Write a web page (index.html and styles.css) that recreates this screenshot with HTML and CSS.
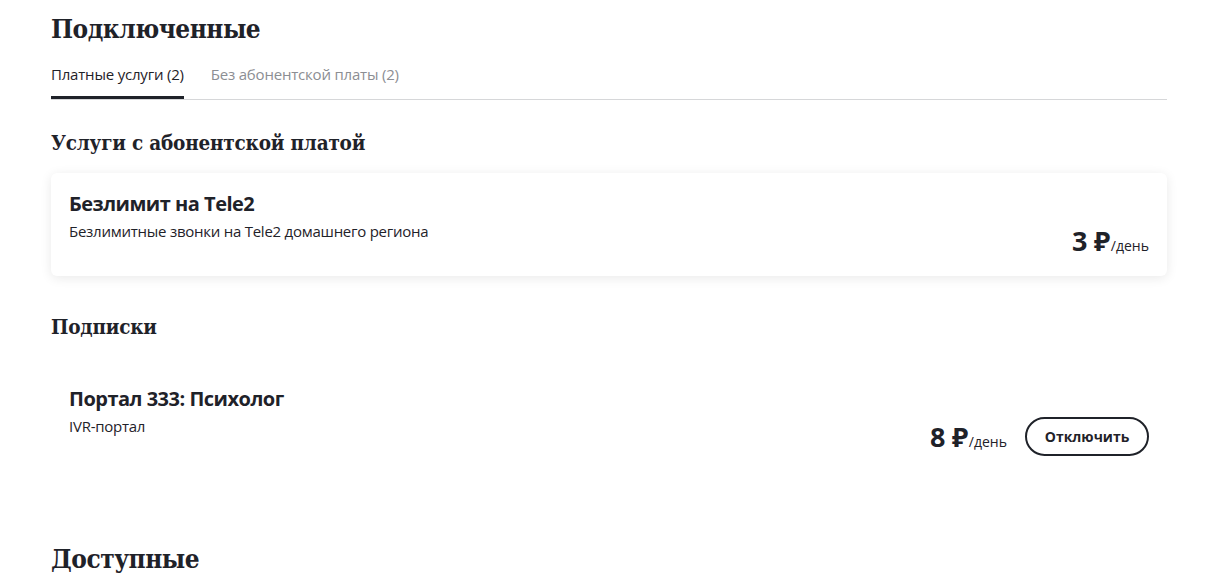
FILE: index.html
```html
<!DOCTYPE html>
<html lang="ru">
<head>
<meta charset="utf-8">
<link rel="stylesheet" href="styles.css">
</head>
<body>
<main class="page">
  <h1 class="title">Подключенные</h1>
  <nav class="tabs">
    <div class="tab active">Платные услуги (2)</div>
    <div class="tab">Без абонентской платы (2)</div>
  </nav>

  <h2 class="section">Услуги с абонентской платой</h2>
  <div class="card shadow">
    <div class="card-info">
      <div class="card-title">Безлимит на Tele2</div>
      <div class="card-sub">Безлимитные звонки на Tele2 домашнего региона</div>
    </div>
    <div class="card-side">
      <div class="price"><span class="amount">3 ₽</span><span class="per">/день</span></div>
    </div>
  </div>

  <h2 class="section subs">Подписки</h2>
  <div class="card plain">
    <div class="card-info">
      <div class="card-title">Портал 333: Психолог</div>
      <div class="card-sub">IVR-портал</div>
    </div>
    <div class="card-side">
      <div class="price"><span class="amount">8 ₽</span><span class="per">/день</span></div>
      <button class="btn">Отключить</button>
    </div>
  </div>

  <h1 class="title available">Доступные</h1>
</main>
</body>
</html>
```
FILE: styles.css
```css
* { box-sizing: border-box; }
html, body { margin: 0; padding: 0; background: #fff; }
body {
  color: #1f2229;
  font-family: "Open Sans", "Noto Sans", sans-serif;
}
.page {
  width: 1116px;
  margin-left: 51px;
  padding-top: 12px;
}
.title {
  font-family: "DejaVu Serif Condensed", "DejaVu Serif", serif;
  font-stretch: condensed;
  font-weight: bold;
  font-size: 26px;
  line-height: 34px;
  margin: 0;
  letter-spacing: -0.5px;
}
.tabs {
  display: flex;
  gap: 27px;
  margin-top: 18px;
  border-bottom: 1px solid #d6d7d9;
}
.tab {
  font-size: 15px;
  line-height: 20px;
  padding-bottom: 15px;
  color: #8c8e93;
  letter-spacing: -0.2px;
}
.tab.active {
  color: #1f2229;
  box-shadow: inset 0 -3px 0 #1f2229;
}
.section {
  font-family: "DejaVu Serif Condensed", "DejaVu Serif", serif;
  font-stretch: condensed;
  font-weight: bold;
  font-size: 20.5px;
  line-height: 26px;
  margin: 30px 0 0;
  letter-spacing: -0.2px;
}
.section.subs {
  margin-top: 38px;
}
.card {
  display: flex;
  justify-content: space-between;
  background: #fff;
  border-radius: 6px;
  padding: 18px 18px 24px;
}
.card.shadow {
  margin-top: 17px;
  box-shadow: 0 2px 12px rgba(0,0,0,0.09);
  height: 103px;
}
.card.plain {
  margin-top: 32px;
  padding-top: 14px;
  height: 120px;
}
.card-title {
  font-weight: bold;
  font-size: 20px;
  line-height: 26px;
  letter-spacing: -0.5px;
}
.card-sub {
  font-size: 15px;
  line-height: 20px;
  margin-top: 4px;
  letter-spacing: -0.25px;
}
.card-side {
  display: flex;
  align-items: center;
  gap: 18px;
  padding-top: 31px;
  align-self: flex-start;
}
.shadow .card-side { padding-top: 31px; }
.price { white-space: nowrap; }
.amount {
  font-weight: bold;
  font-size: 27px;
  letter-spacing: -0.3px;
}
.per {
  font-size: 14px;
  margin-left: 1px;
}
.btn {
  font-family: "Open Sans", "Noto Sans", sans-serif;
  font-weight: bold;
  font-size: 14px;
  color: #1f2229;
  background: #fff;
  border: 2px solid #1f2229;
  border-radius: 20px;
  width: 124px;
  height: 39px;
  cursor: pointer;
}
.available {
  margin-top: 50px;
}
```
